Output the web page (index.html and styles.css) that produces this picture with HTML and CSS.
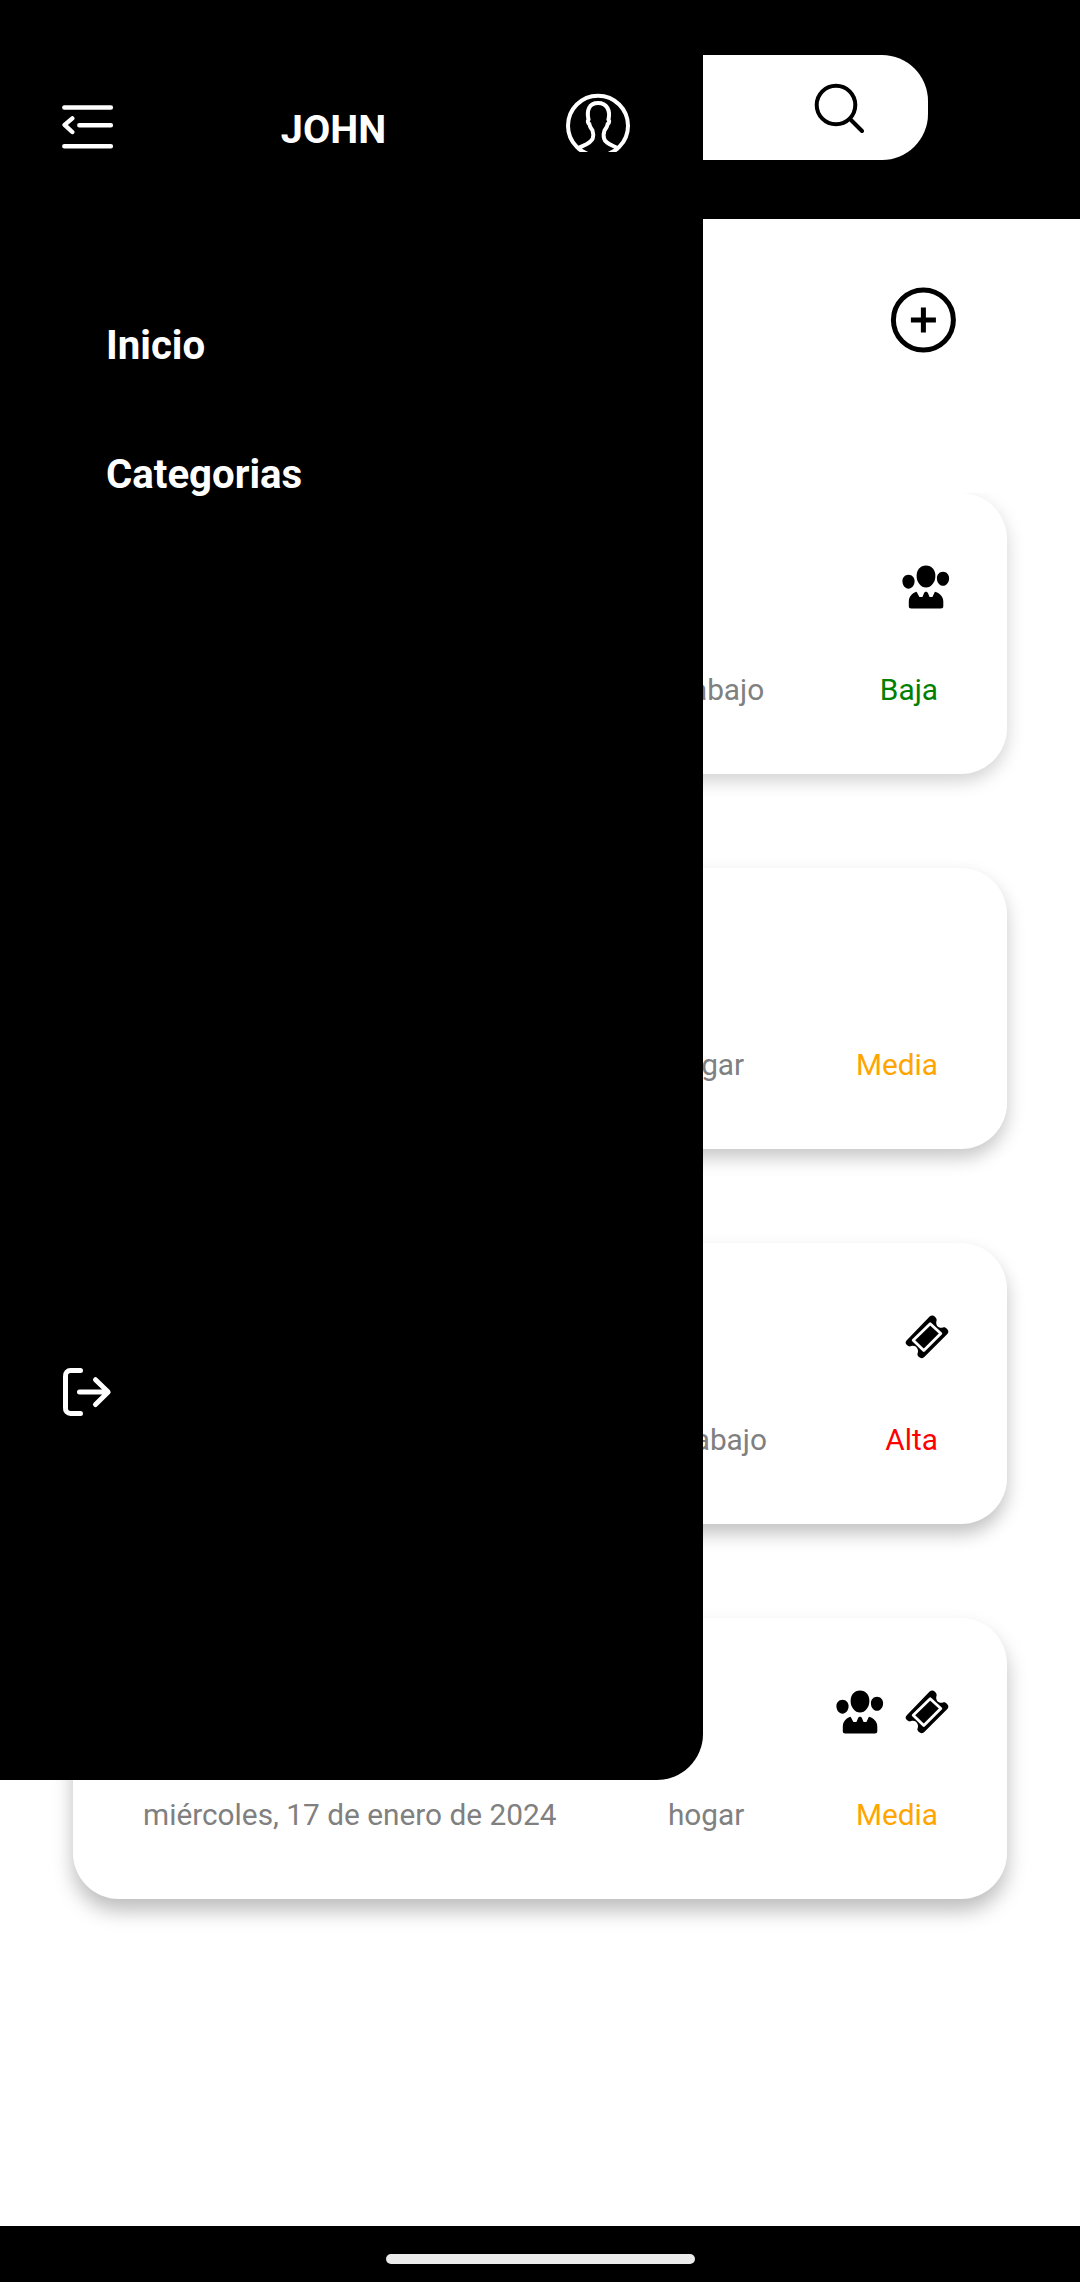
FILE: index.html
```html
<!DOCTYPE html>
<html lang="es">
<head>
<meta charset="utf-8">
<title>Tareas</title>
<link rel="stylesheet" href="styles.css">
</head>
<body>
<svg class="defs" aria-hidden="true">
  <symbol id="people" viewBox="0 0 48 44">
    <path d="M24 .5c5.800 0 9.400 4.600 9.400 10.400C33.400 17 29.200 22.500 24 22.500S14.600 17 14.600 10.900C14.600 5.100 18.200.5 24 .5z"/>
    <path d="M6.500 9.700c3.600 0 6.100 2.900 6.100 6.400 0 4.100-2.700 7.700-6.100 7.700S.4 20.200.4 16.100c0-3.500 2.500-6.400 6.100-6.400z"/>
    <path d="M41 6.800c3.600 0 6.100 2.900 6.100 6.400 0 4.100-2.700 7.600-6.100 7.600s-6.100-3.500-6.100-7.600c0-3.500 2.500-6.400 6.100-6.400z"/>
    <path d="M14.600 26.800 17.400 32h3l1.600-3.700c.7-2 3.300-2 4 0l1.600 3.700h2.800l2.500-5.200c4.500 1.100 8.400 4.800 8.400 9.600V41c0 1.800-.8 2.500-2.500 2.500H9.300c-1.700 0-2.500-.7-2.500-2.500v-4.600c0-4.500 3.600-8.700 7.800-9.600z"/>
  </symbol>
  <symbol id="ticket" viewBox="0 0 44 44">
    <path d="M24.400 1.700c1.800-1.700 3.800-1.700 5.300-.2 1.800 1.800 2.500 3.100 1.700 4.700-1.100 4.200 2.500 7.500 6.500 6.300 1.500-.6 2.700-.1 4.200 1.400 1.800 1.900 1.600 3.600 0 5.300L19.300 42c-1.700 1.600-3.700 1.700-5.300.1-1.700-1.700-2-2.700-1.200-4.300 1.300-4.200-2.400-8-6.500-6.800-1.600.8-2.900.4-4.400-1-1.800-1.800-1.600-3.400.1-5.100z"/>
    <path class="ticket-frame" d="M25.200 8.700 35.800 18.500 18.800 35.500 8.200 25.200z"/>
  </symbol>
</svg>

<div class="screen">
  <header class="topbar">
    <div class="search">
      <svg class="search-icon" viewBox="0 0 50 51"><circle cx="22" cy="22" r="19.300"/><path d="M36 36 48 48"/></svg>
    </div>
  </header>

  <main class="content">
    <div class="toolbar">
      <svg class="add-icon" viewBox="0 0 66 66"><circle cx="33.400" cy="33" r="30"/><path d="M33.400 20.500v25M20.900 33h25"/></svg>
    </div>

    <section class="list">
      <article class="card card-1">
        <div class="icons"><svg class="people"><use href="#people"/></svg></div>
        <div class="meta"><span class="date"></span><span>trabajo</span><span class="low">Baja</span></div>
      </article>
      <article class="card card-2">
        <div class="icons"></div>
        <div class="meta"><span class="date"></span><span>hogar</span><span class="mid">Media</span></div>
      </article>
      <article class="card card-3">
        <div class="icons"><svg class="ticket"><use href="#ticket"/></svg></div>
        <div class="meta"><span class="date"></span><span>trabajo</span><span class="high">Alta</span></div>
      </article>
      <article class="card card-4">
        <div class="icons"><svg class="people"><use href="#people"/></svg><svg class="ticket"><use href="#ticket"/></svg></div>
        <div class="meta"><span class="date">miércoles, 17 de enero de 2024</span><span>hogar</span><span class="mid">Media</span></div>
      </article>
    </section>
  </main>

  <footer class="navbar"><div class="handle"></div></footer>

  <aside class="drawer">
    <div class="drawer-head">
      <svg class="menu-icon" viewBox="0 0 52 44"><path d="M2.300 2.500h46.600M17.300 20.200h31.600M2.300 41.200h46.600M10.300 13.400 2.600 19.900l7.700 7.100"/></svg>
      <span class="user">JOHN</span>
      <svg class="user-icon" viewBox="0 0 66 59"><circle cx="33" cy="32.700" r="30"/><path d="M12 56c5-3.500 13.500-4.800 15.700-10.500.9-2.500.6-5.500-.2-8-2-2.500-2.800-4-3.200-6.500-1.500-1-2-3-.8-4.500-2-9 .5-16.500 9.500-16.500s12.500 7.500 10.500 16.500c1.200 1.500.7 3.500-.8 4.500-.4 2.500-1.200 4-3.200 6.500-.8 2.500-1.300 5.500-.4 8C40.300 51.200 49 52.500 54 56"/></svg>
    </div>
    <nav class="links">
      <a>Inicio</a>
      <a>Categorias</a>
    </nav>
    <svg class="logout-icon" viewBox="0 0 50 50"><path d="M18.500 3.500H8.500a5 5 0 0 0-5 5.500v32a5 5 0 0 0 5 5.500h10M17.500 25H46M33.500 12.700 46.200 25 33.500 37.500"/></svg>
  </aside>
</div>
</body>
</html>
```
FILE: styles.css
```css
* { box-sizing: border-box; }

body {
  margin: 0;
  background: #fff;
  font-family: Roboto, "Liberation Sans", sans-serif;
}

.defs { position: absolute; width: 0; height: 0; }

.screen {
  position: relative;
  display: flex;
  flex-direction: column;
  width: 1080px;
  height: 2282px;
  overflow: hidden;
}

.topbar {
  height: 219px;
  padding: 55px 152px 0;
  background: #000;
}

.search {
  display: flex;
  align-items: flex-start;
  justify-content: flex-end;
  height: 105px;
  padding: 28px 64px 0 0;
  border-radius: 46px;
  background: #fff;
}

.search-icon, .add-icon, .menu-icon, .user-icon, .logout-icon {
  fill: none;
  stroke: #fff;
}

.search-icon {
  width: 50px;
  height: 51px;
  stroke: #000;
  stroke-width: 4;
  stroke-linecap: round;
}

.content { flex: 1; }

.toolbar {
  display: flex;
  justify-content: flex-end;
  height: 274px;
  padding: 68px 124px 0 0;
}

.add-icon {
  width: 66px;
  height: 66px;
  stroke: #000;
  stroke-width: 5;
}

.list {
  display: flex;
  flex-direction: column;
  gap: 94px;
  padding: 0 73px;
  clip-path: inset(0 0 -60px 0);
}

.card {
  height: 281px;
  padding: 72px 69px 0 70px;
  border-radius: 46px;
  background: #fff;
}

.card-1 { box-shadow: 0 7px 18px rgba(0, 0, 0, .18); }
.card-2 { box-shadow: 0 9px 18px rgba(0, 0, 0, .22); }
.card-3 { box-shadow: 0 10px 18px rgba(0, 0, 0, .24); }
.card-4 { box-shadow: 0 12px 20px rgba(0, 0, 0, .26); }

.icons {
  display: flex;
  justify-content: flex-end;
  gap: 22px;
  height: 107px;
  margin-right: -11px;
}

.people { width: 48px; height: 44px; margin-right: -1px; }
.ticket { width: 44px; height: 44px; }
.ticket-frame { fill: none; stroke: #fff; stroke-width: 2.8; stroke-linejoin: round; }

.meta {
  display: flex;
  justify-content: space-between;
  color: #808080;
  font-size: 29.8px;
  line-height: 36px;
  white-space: nowrap;
}

.date { min-width: 413px; }

.low { color: #008000; }
.mid { color: #ffa500; }
.high { color: #f00; }

.navbar {
  display: flex;
  justify-content: center;
  height: 56px;
  padding-top: 28px;
  background: #000;
}

.handle {
  width: 309px;
  height: 10px;
  border-radius: 5px;
  background: #ebebeb;
}

.drawer {
  position: absolute;
  top: 0;
  left: 0;
  display: flex;
  flex-direction: column;
  width: 703px;
  height: 1780px;
  padding: 93px 72px 0 62px;
  border-bottom-right-radius: 46px;
  background: #000;
  color: #fff;
  font-size: 40.2px;
  font-weight: 700;
  line-height: 46px;
}

.drawer-head {
  display: flex;
  align-items: flex-start;
  justify-content: space-between;
  height: 230px;
}

.menu-icon {
  width: 52px;
  height: 44px;
  margin-top: 12px;
  stroke-width: 4.4;
  stroke-linecap: round;
  stroke-linejoin: round;
}

.user {
  margin: 14px 12px 0 0;
  font-size: 39.6px;
}

.user-icon {
  width: 66px;
  height: 59px;
  stroke-width: 4;
}

.links {
  display: flex;
  flex-direction: column;
  gap: 83px;
  height: 1044px;
  padding-left: 44px;
}

.logout-icon {
  width: 50px;
  height: 50px;
  stroke-width: 5;
  stroke-linecap: round;
  stroke-linejoin: round;
}
```
